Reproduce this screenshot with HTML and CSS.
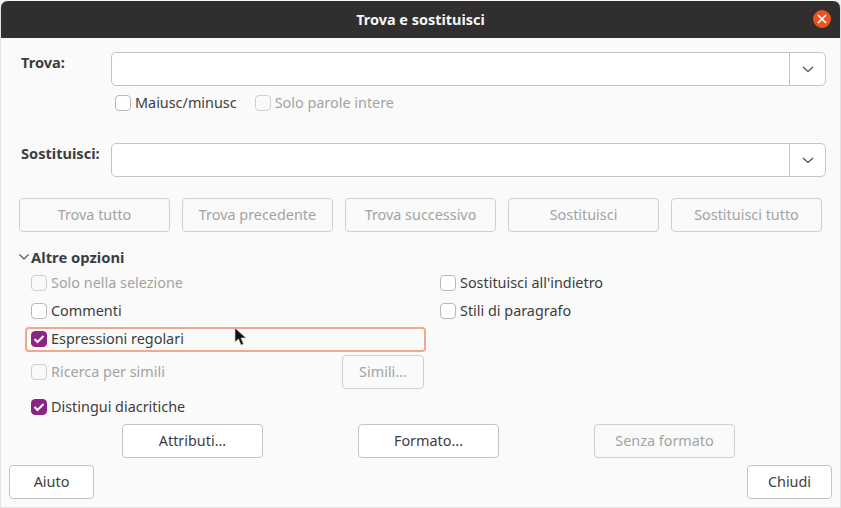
FILE: index.html
```html
<!DOCTYPE html>
<html lang="it">
<head>
    <meta charset="UTF-8">
    <meta name="viewport" content="width=device-width, initial-scale=1.0">
    <title>Trova e sostituisci</title>
    <link rel="stylesheet" href="styles.css">
</head>
<body>

<div class="window">
    <div class="titlebar">
        <span class="title">Trova e sostituisci</span>
        <span class="close-btn">
            <svg width="10" height="10" viewBox="0 0 10 10"><path d="M1 1L9 9M9 1L1 9" stroke="#fff" stroke-width="1.6" fill="none"/></svg>
        </span>
    </div>

    <div class="content">
        <div class="field-row find-row">
            <label class="field-label">Trova:</label>
            <div class="combo">
                <div class="combo-input"></div>
                <div class="combo-arrow">
                    <svg width="12" height="7" viewBox="0 0 12 7"><path d="M1 1L6 5.5L11 1" stroke="#4a4a4a" stroke-width="1.1" fill="none"/></svg>
                </div>
            </div>
        </div>
        <div class="find-options">
            <label class="check"><span class="box"></span>Maiusc/minusc</label>
            <label class="check disabled"><span class="box"></span>Solo parole intere</label>
        </div>

        <div class="field-row replace-row">
            <label class="field-label">Sostituisci:</label>
            <div class="combo">
                <div class="combo-input"></div>
                <div class="combo-arrow">
                    <svg width="12" height="7" viewBox="0 0 12 7"><path d="M1 1L6 5.5L11 1" stroke="#4a4a4a" stroke-width="1.1" fill="none"/></svg>
                </div>
            </div>
        </div>

        <div class="action-row">
            <button class="btn disabled">Trova tutto</button>
            <button class="btn disabled">Trova precedente</button>
            <button class="btn disabled">Trova successivo</button>
            <button class="btn disabled">Sostituisci</button>
            <button class="btn disabled">Sostituisci tutto</button>
        </div>

        <div class="more-heading">
            <svg width="10" height="6" viewBox="0 0 10 6"><path d="M0.5 0.5L5 5L9.5 0.5" stroke="#4a4a4a" stroke-width="1.1" fill="none"/></svg>
            <span>Altre opzioni</span>
        </div>

        <div class="more-options">
            <div class="col-left">
                <div class="opt-row"><label class="check disabled"><span class="box"></span>Solo nella selezione</label></div>
                <div class="opt-row"><label class="check"><span class="box"></span>Commenti</label></div>
                <div class="opt-row">
                    <label class="check focused"><span class="box checked">
                        <svg width="12" height="10" viewBox="0 0 12 10"><path d="M1.5 5L4.5 8L10.5 2" stroke="#fff" stroke-width="2" fill="none"/></svg>
                    </span>Espressioni regolari</label>
                </div>
                <div class="opt-row similar-row">
                    <label class="check disabled"><span class="box"></span>Ricerca per simili</label>
                    <button class="btn disabled similar-btn">Simili...</button>
                </div>
                <div class="opt-row last-row">
                    <label class="check"><span class="box checked">
                        <svg width="12" height="10" viewBox="0 0 12 10"><path d="M1.5 5L4.5 8L10.5 2" stroke="#fff" stroke-width="2" fill="none"/></svg>
                    </span>Distingui diacritiche</label>
                </div>
            </div>
            <div class="col-right">
                <div class="opt-row"><label class="check"><span class="box"></span>Sostituisci all'indietro</label></div>
                <div class="opt-row"><label class="check"><span class="box"></span>Stili di paragrafo</label></div>
            </div>
        </div>

        <div class="format-row">
            <button class="btn">Attributi...</button>
            <button class="btn">Formato...</button>
            <button class="btn disabled">Senza formato</button>
        </div>

        <div class="footer">
            <button class="btn footer-btn">Aiuto</button>
            <button class="btn footer-btn">Chiudi</button>
        </div>
    </div>

    <svg class="cursor" width="14" height="20" viewBox="0 0 14 20"><path d="M1 1L1 15L4.5 12L7 18L9.5 17L7 11L12 11Z" fill="#111" stroke="#ccc" stroke-width="0.7"/></svg>
</div>

</body>
</html>
```

FILE: styles.css
```css
* {
    box-sizing: border-box;
}
html, body {
    margin: 0;
    padding: 0;
    background-color: #f0f0f0;
}
body {
    font-family: "Noto Sans", "Open Sans", sans-serif;
    font-size: 14.4px;
    color: #3d3d3d;
    width: 841px;
    height: 508px;
    overflow: hidden;
}
.window {
    position: relative;
    width: 841px;
    height: 508px;
    display: flex;
    flex-direction: column;
    background-color: #fafafa;
    border-radius: 8px 8px 0 0;
    border-left: 1px solid #e2e2e2;
    border-right: 1px solid #e2e2e2;
    border-bottom: 1px solid #e2e2e2;
    overflow: hidden;
}
.titlebar {
    height: 37px;
    margin: 1px -1px 0;
    flex: none;
    background-color: #302e2e;
    border-radius: 8px 8px 0 0;
    display: flex;
    align-items: center;
    justify-content: center;
    position: relative;
}
.title {
    color: #f5f5f5;
    font-weight: 700;
    font-size: 14.45px;
}
.close-btn {
    position: absolute;
    right: 10px;
    top: 9px;
    width: 18px;
    height: 18px;
    border-radius: 50%;
    background-color: #e95420;
    display: flex;
    align-items: center;
    justify-content: center;
}
.content {
    flex: 1;
    display: flex;
    flex-direction: column;
}
.field-row {
    display: flex;
    height: 34px;
    padding-left: 20px;
    padding-right: 14px;
}
.find-row {
    margin-top: 14px;
}
.replace-row {
    margin-top: 31px;
}
.field-label {
    width: 90px;
    flex: none;
    font-weight: 700;
    font-size: 14.6px;
    line-height: 20px;
}
.combo {
    flex: 1;
    display: flex;
    background-color: #fff;
    border: 1px solid #c4c4c4;
    border-radius: 5px;
}
.combo-input {
    flex: 1;
}
.combo-arrow {
    width: 36px;
    border-left: 1px solid #c4c4c4;
    display: flex;
    align-items: center;
    justify-content: center;
}
.find-options {
    display: flex;
    gap: 18px;
    margin-top: 8px;
    padding-left: 114px;
    height: 18px;
    align-items: center;
}
.check {
    display: flex;
    align-items: center;
    padding-bottom: 2px;
    white-space: nowrap;
}
.check.disabled {
    color: #a3a3a3;
}
.box {
    width: 16px;
    height: 16px;
    flex: none;
    margin-right: 4px;
    margin-bottom: -2px;
    background-color: #fff;
    border: 1px solid #b9b9b9;
    border-radius: 4px;
    display: flex;
    align-items: center;
    justify-content: center;
}
.check.disabled .box {
    background-color: #fafafa;
    border-color: #cfcfcf;
}
.box.checked {
    background-color: #8c2483;
    border-color: #8c2483;
}
.action-row {
    display: flex;
    gap: 12px;
    margin-top: 21px;
    padding-left: 18px;
}
.btn {
    width: 151px;
    height: 34px;
    padding: 0 0 2px;
    font-family: inherit;
    font-size: 14.4px;
    color: #3d3d3d;
    background-color: #fff;
    border: 1px solid #c4c4c4;
    border-radius: 4px;
}
.btn.disabled {
    color: #a3a3a3;
    background-color: #fafafa;
    border-color: #cfcfcf;
}
.more-heading {
    display: flex;
    align-items: center;
    gap: 2px;
    margin-top: 16px;
    padding-left: 18px;
    padding-bottom: 2px;
    height: 20px;
    font-weight: 700;
    font-size: 14.8px;
}
.more-options {
    display: flex;
    margin-top: 1px;
}
.col-left {
    width: 401px;
    margin-left: 24px;
    flex: none;
}
.col-right {
    margin-left: 14px;
}
.opt-row {
    height: 28px;
    display: flex;
    align-items: center;
    padding-left: 6px;
}
.col-right .opt-row {
    padding-left: 0;
}
.similar-row {
    height: 38px;
    justify-content: space-between;
    padding-right: 2px;
}
.last-row {
    height: 32px;
}
.check.focused {
    flex: 1;
    height: 25px;
    margin-left: -6px;
    padding-left: 4px;
    background-color: #fafafa;
    border: 2px solid #f2a88d;
    border-radius: 4px;
}
.similar-btn {
    width: 82px;
}
.format-row {
    display: flex;
    gap: 95px;
    margin-top: 1px;
    padding-left: 121px;
}
.format-row .btn {
    width: 141px;
}
.footer {
    display: flex;
    justify-content: space-between;
    margin-top: 7px;
    padding: 0 8px;
}
.footer-btn {
    width: 85px;
}
.cursor {
    position: absolute;
    left: 233px;
    top: 327px;
}
```
